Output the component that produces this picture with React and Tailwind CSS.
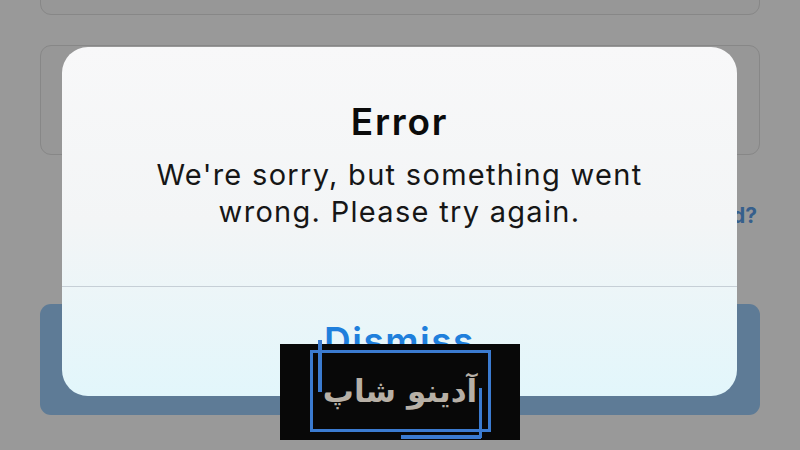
import React from "react";

function Watermark() {
  return (
    <div className="absolute left-[280px] top-[344px] w-[240px] h-[96px] bg-[#080808]">
      {/* blue frame, drawn a bit off like the original */}
      <div className="absolute left-[30px] top-[6px] w-[181px] h-[82px] border-[3px] border-[#3b7bd0]" />
      <div className="absolute left-[38px] top-[-4px] w-[4px] h-[52px] bg-[#3b7bd0]" />
      <div className="absolute left-[199px] top-[44px] w-[3px] h-[50px] bg-[#3b7bd0]" />
      <div className="absolute left-[121px] top-[91px] w-[80px] h-[4px] bg-[#3b7bd0]" />
      <div className="relative h-full flex items-center justify-center pb-[2px]">
        <span
          dir="rtl"
          className="text-[31px] font-bold leading-none text-[#b7b0a6]"
          style={{ fontFamily: '"DejaVu Sans", "Noto Sans", sans-serif' }}
        >
          آدینو شاپ
        </span>
      </div>
    </div>
  );
}

function Alert() {
  return (
    <div
      className="absolute left-[62px] top-[47px] w-[675px] h-[349px] rounded-[26px] flex flex-col overflow-hidden bg-gradient-to-b from-[#f8f8f9] via-[#f3f5f6] to-[#e2f6fb]"
      style={{ fontFamily: "Inter, 'Liberation Sans', sans-serif" }}
    >
      <div className="h-[239px] flex flex-col items-center pt-[56px]">
        <h1 className="text-[37px] leading-[37px] font-semibold tracking-[1.8px] text-[#0b0b0b]">Error</h1>
        <p className="mt-[16px] text-[29px] leading-[37px] tracking-[1.3px] text-[#161616] text-center">
          We're sorry, but something went
          <br />
          wrong. Please try again.
        </p>
      </div>
      <div className="h-px bg-[#c6cfd6]" />
      <div className="flex-1 flex justify-center pt-[35px]">
        <span className="text-[37px] leading-[37px] font-semibold tracking-[1.5px] text-[#1f7fdc]">Dismiss</span>
      </div>
    </div>
  );
}

export default function App() {
  return (
    <div className="relative w-[800px] h-[450px] overflow-hidden bg-[#999999]">
      <div
        className="flex flex-col px-[40px]"
        style={{ fontFamily: "Inter, 'Liberation Sans', sans-serif" }}
      >
        <div className="mt-[-40px] h-[55px] rounded-[11px] border-[1.5px] border-[#878787] bg-[#979797]" />
        <div className="mt-[30px] h-[110px] rounded-[11px] border-[1.5px] border-[#878787] bg-[#979797]" />
        <div className="mt-[45px] h-[30px] flex justify-end pr-[3px]">
          <span className="text-[21px] font-bold text-[#365f8c]">Forgot password?</span>
        </div>
        <div className="mt-[74px] h-[111px] rounded-[11px] bg-[#5e7b96]" />
      </div>
      <Alert />
      <Watermark />
    </div>
  );
}
